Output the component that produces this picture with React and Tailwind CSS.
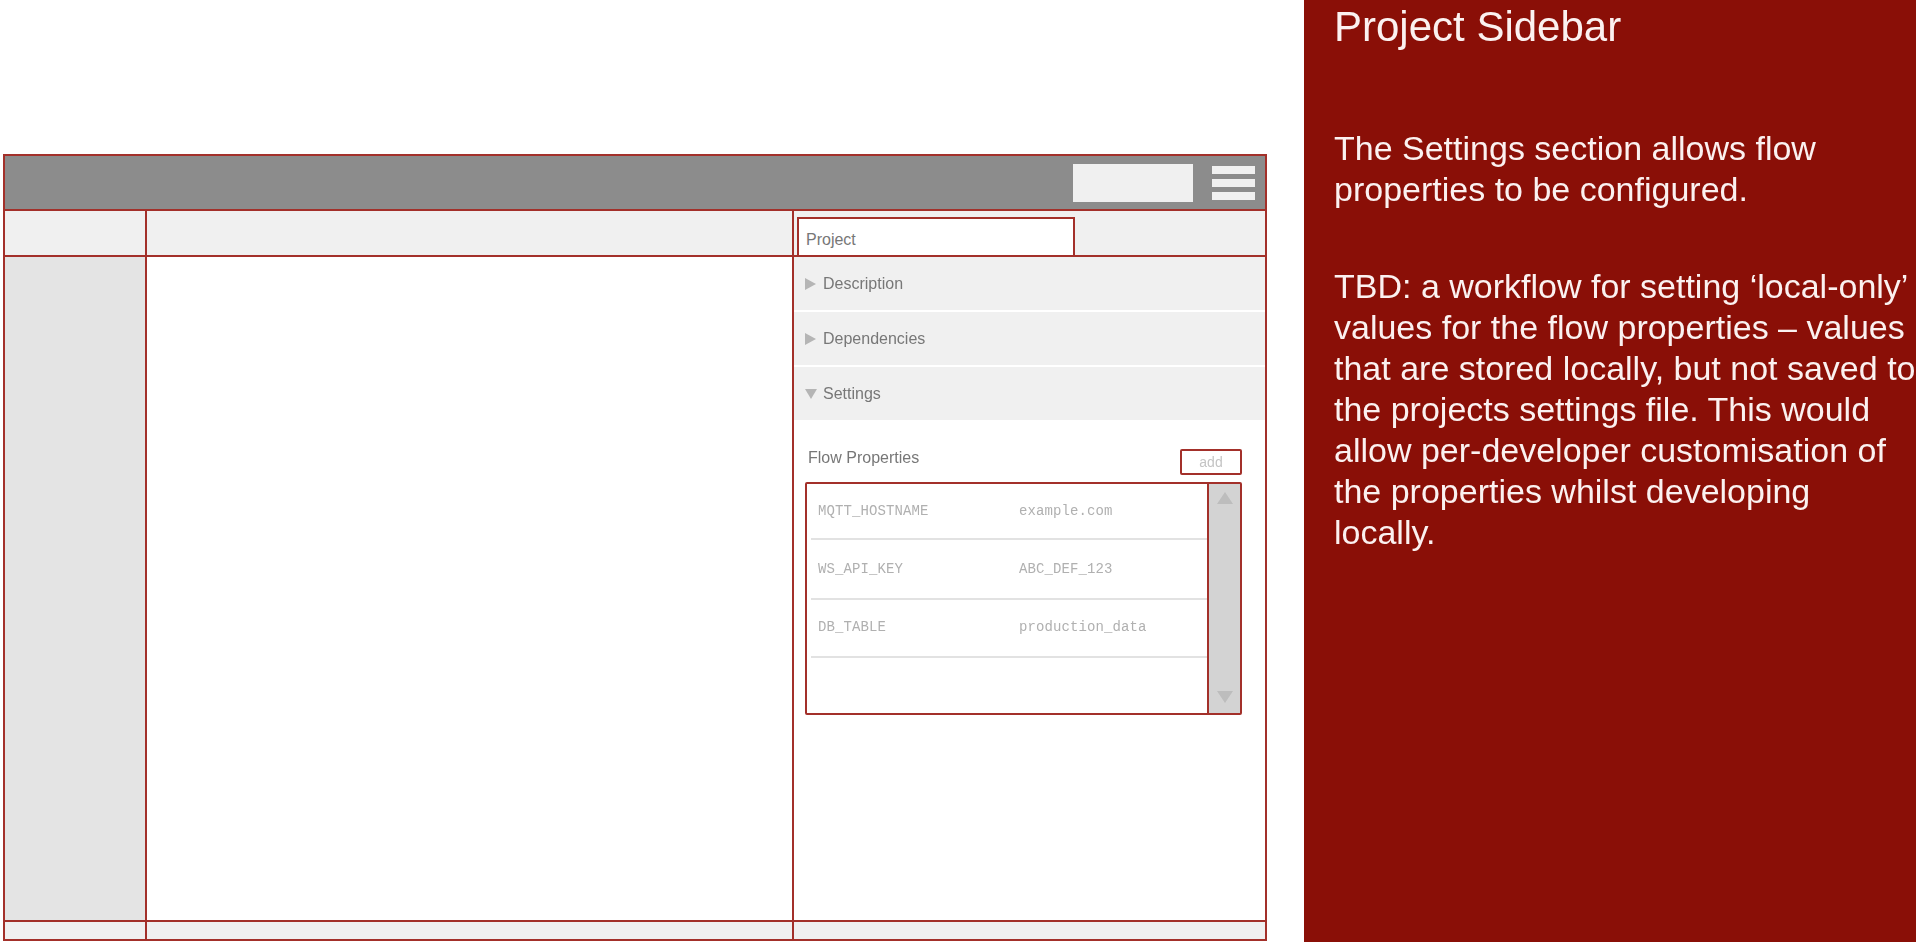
export default function App() {
  const rows = [
    ["MQTT_HOSTNAME", "example.com", "h-[56px]"],
    ["WS_API_KEY", "ABC_DEF_123", "h-[60px]"],
    ["DB_TABLE", "production_data", "h-[58px] pb-[2px]"],
  ];
  const sections = [
    ["Description", false],
    ["Dependencies", false],
    ["Settings", true],
  ];
  return (
    <div className="flex h-[942px] w-[1916px] overflow-hidden bg-white font-['Liberation_Sans',sans-serif]">
      <div className="w-[1304px] shrink-0 pl-[3px] pt-[154px] blur-[0.6px]">
        <div className="flex h-[787px] w-[1264px] flex-col border-2 border-[#a3302a]">
          <div className="flex h-[55px] shrink-0 items-center justify-end gap-[19px] border-b-2 border-[#a3302a] bg-[#8c8c8c] pr-[10px]">
            <div className="h-[38px] w-[120px] bg-[#f0f0f0]" />
            <div className="flex w-[43px] flex-col gap-[5px]">
              <div className="h-[8px] bg-[#f0f0f0]" />
              <div className="h-[8px] bg-[#f0f0f0]" />
              <div className="h-[8px] bg-[#f0f0f0]" />
            </div>
          </div>
          <div className="grid h-[46px] shrink-0 grid-cols-[142px_647px_1fr] border-b-2 border-[#a3302a] bg-[#f0f0f0]">
            <div className="border-r-2 border-[#a3302a]" />
            <div className="border-r-2 border-[#a3302a]" />
            <div className="pl-[3px] pt-[6px]">
              <div className="flex h-[38px] w-[278px] items-center border-x-2 border-t-2 border-[#a3302a] bg-white pl-[7px] pt-[6px] text-[16px] text-[#777777]">
                Project
              </div>
            </div>
          </div>
          <div className="grid min-h-0 flex-1 grid-cols-[142px_647px_1fr] border-b-2 border-[#a3302a]">
            <div className="border-r-2 border-[#a3302a] bg-[#e4e4e4]" />
            <div className="border-r-2 border-[#a3302a] bg-white" />
            <div className="flex flex-col">
              <div className="flex flex-col gap-[2px]">
                {sections.map(([label, open]) => (
                  <div key={label} className="flex h-[53px] items-center bg-[#f0f0f0] pl-[11px] pt-[1px] text-[16px] text-[#777777]">
                    <svg width="12" height="12" viewBox="0 0 12 12" className="mr-[6px] shrink-0">
                      {open ? (
                        <polygon points="0,1 12,1 6,11" fill="#b5b5b5" />
                      ) : (
                        <polygon points="0,0 11,6 0,12" fill="#b5b5b5" />
                      )}
                    </svg>
                    {label}
                  </div>
                ))}
              </div>
              <div className="mt-[29px] flex items-start justify-between pl-[14px] pr-[23px]">
                <div className="text-[16px] leading-[18px] text-[#777777]">Flow Properties</div>
                <div className="flex h-[26px] w-[62px] items-center justify-center rounded-[2px] border-2 border-[#a3302a] text-[14px] text-[#c4c4c4]">
                  add
                </div>
              </div>
              <div className="ml-[11px] mt-[7px] flex h-[233px] w-[437px] rounded-[2px] border-2 border-[#a3302a]">
                <div className="min-w-0 flex-1 pl-[4px]">
                  {rows.map(([k, v, cls]) => (
                    <div key={k} className={`flex items-center border-b-2 border-[#e2e2e2] pl-[7px] font-['Liberation_Mono',monospace] text-[14px] tracking-[0.1px] text-[#b0b0b0] ${cls}`}>
                      <div className="w-[201px] shrink-0">{k}</div>
                      <div>{v}</div>
                    </div>
                  ))}
                </div>
                <div className="flex w-[33px] shrink-0 flex-col items-center justify-between border-l-2 border-[#a3302a] bg-[#d3d3d3] pb-[10px] pt-[8px]">
                  <svg width="16" height="12" viewBox="0 0 16 12"><polygon points="8,0 16,12 0,12" fill="#bdbdbd" /></svg>
                  <svg width="16" height="12" viewBox="0 0 16 12"><polygon points="0,0 16,0 8,12" fill="#bdbdbd" /></svg>
                </div>
              </div>
            </div>
          </div>
          <div className="grid h-[17px] shrink-0 grid-cols-[142px_647px_1fr] bg-[#f0f0f0]">
            <div className="border-r-2 border-[#a3302a]" />
            <div className="border-r-2 border-[#a3302a]" />
            <div />
          </div>
        </div>
      </div>
      <div className="min-w-0 flex-1 overflow-hidden bg-[#8a0f07] pl-[30px] pt-[2px] text-[#fbf1f0]">
        <div className="blur-[0.5px]">
          <div className="whitespace-nowrap text-[42px] leading-[50px]">Project Sidebar</div>
          <div className="mt-[76px] whitespace-nowrap text-[34px] leading-[41px]">
            The Settings section allows flow
            <br />
            properties to be configured.
          </div>
          <div className="mt-[56px] whitespace-nowrap text-[34px] leading-[41px]">
            TBD: a workflow for setting ‘local-only’
            <br />
            values for the flow properties – values
            <br />
            that are stored locally, but not saved to
            <br />
            the projects settings file. This would
            <br />
            allow per-developer customisation of
            <br />
            the properties whilst developing
            <br />
            locally.
          </div>
        </div>
      </div>
    </div>
  );
}
